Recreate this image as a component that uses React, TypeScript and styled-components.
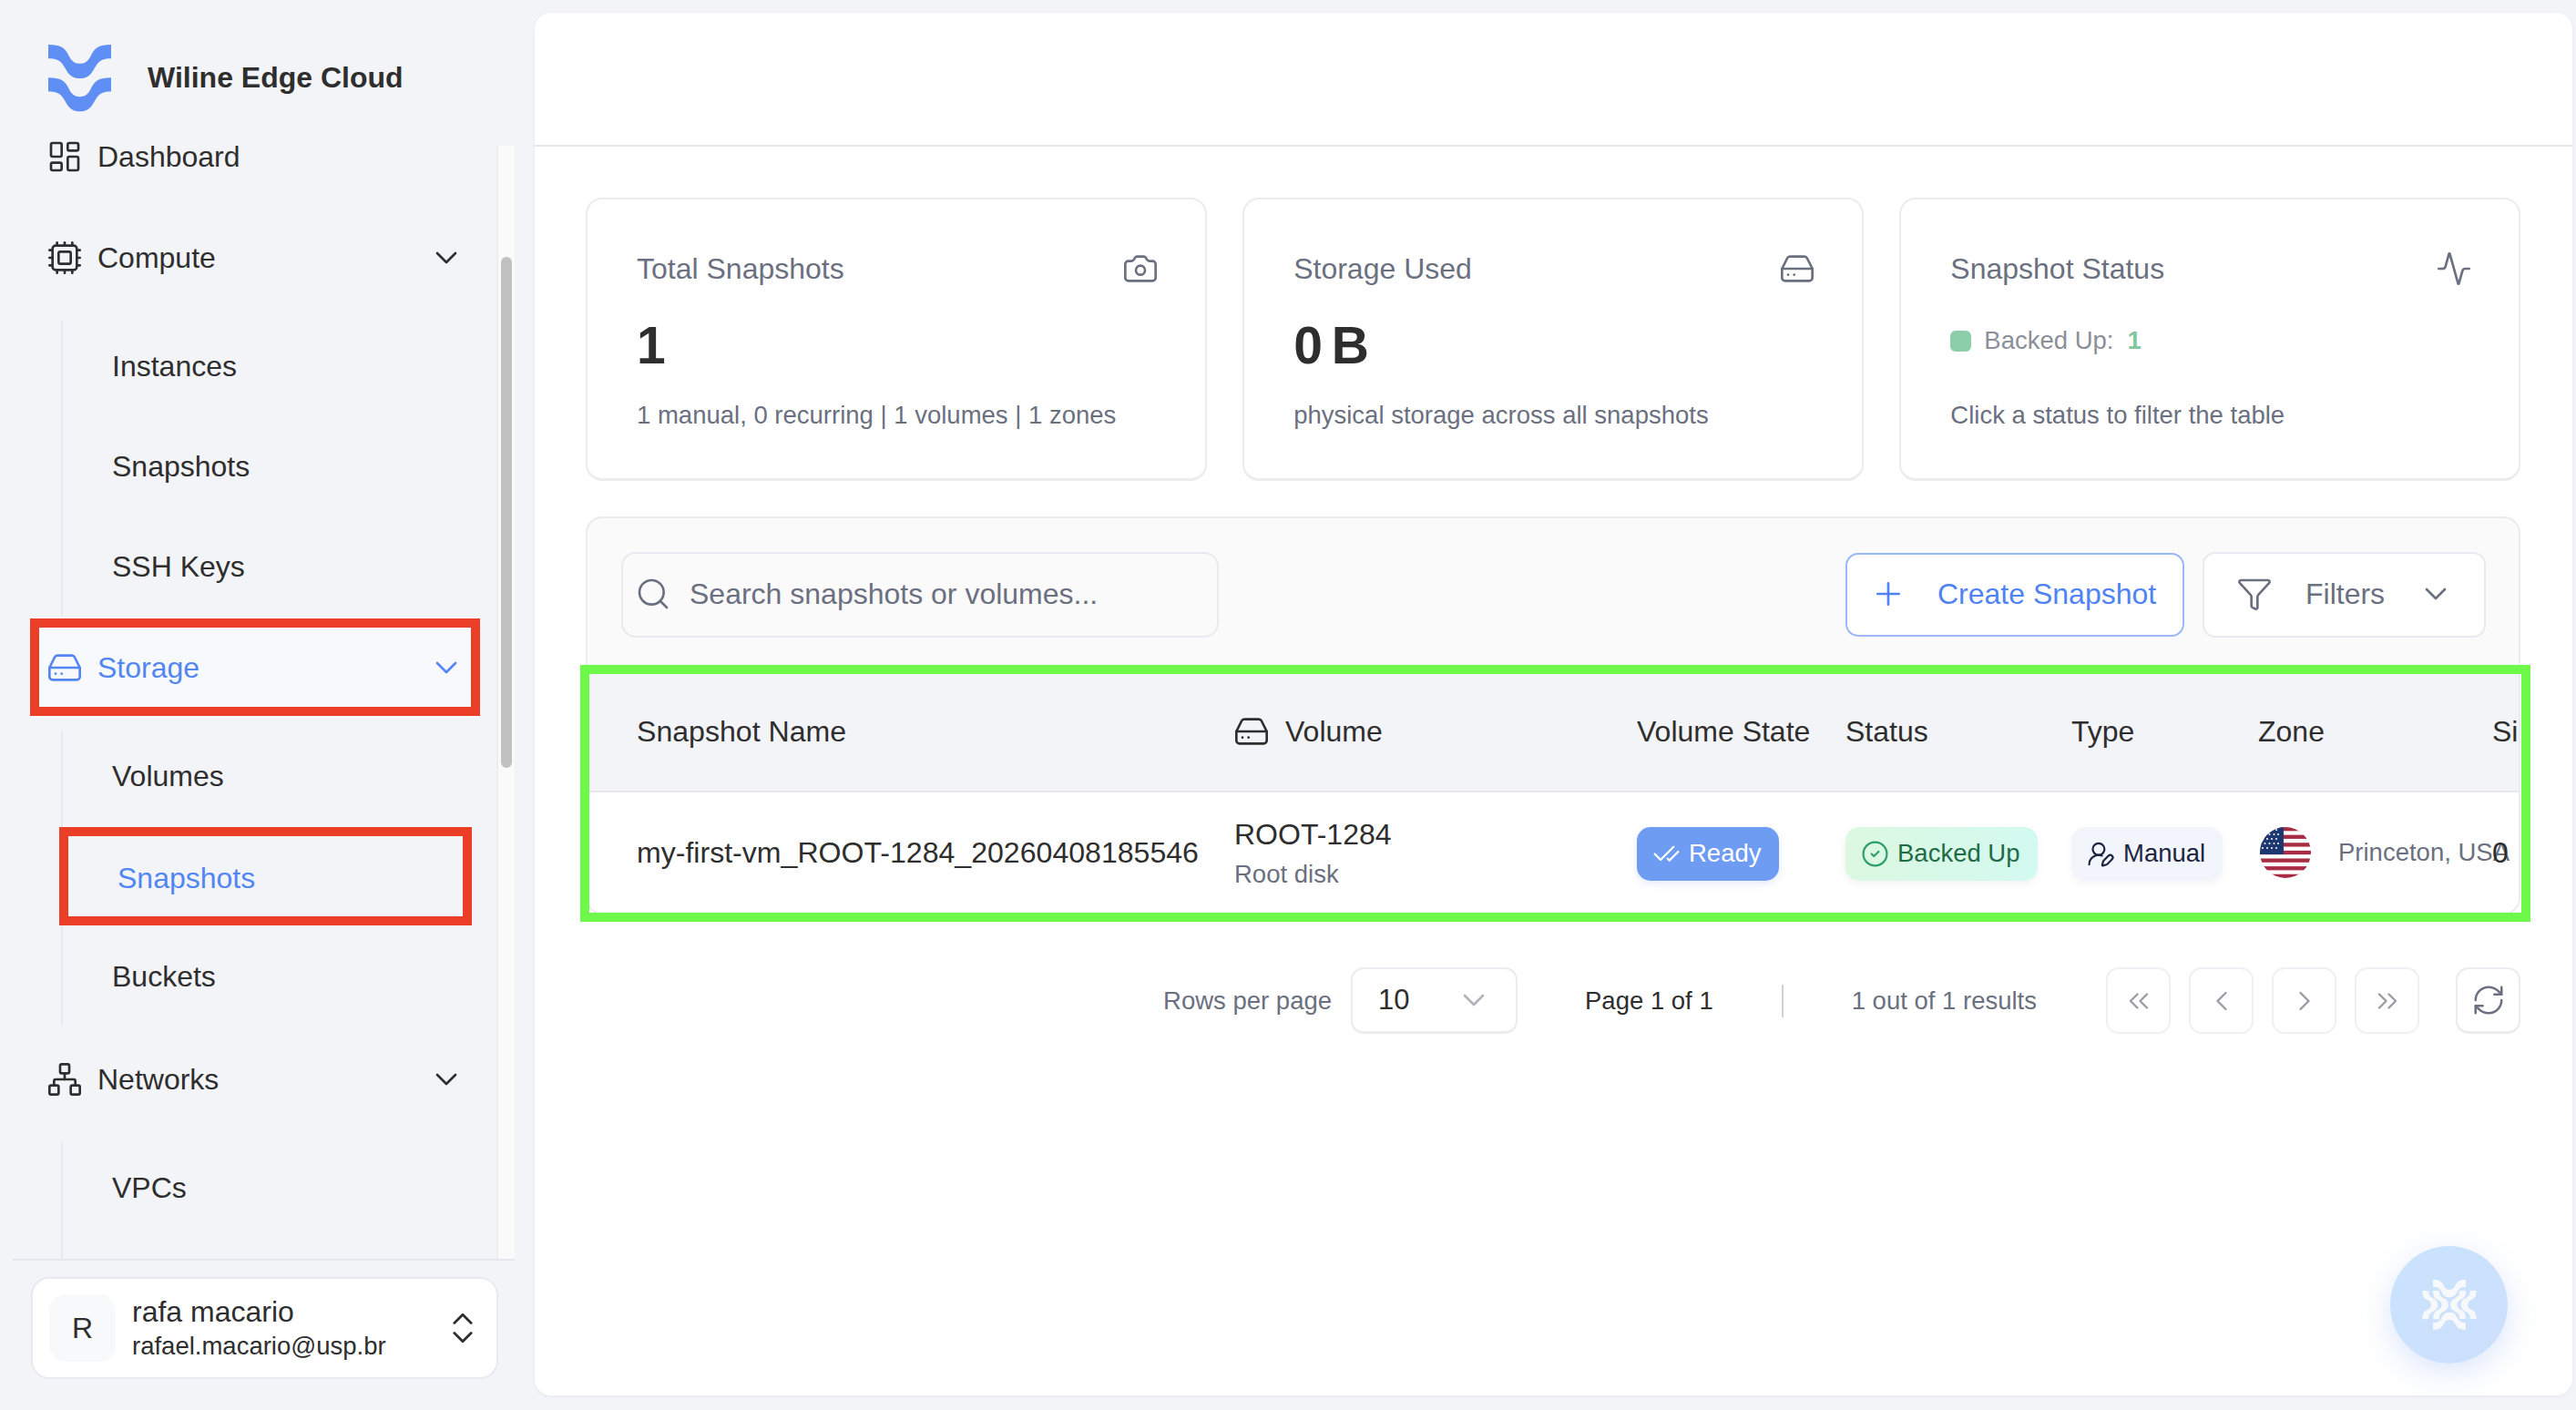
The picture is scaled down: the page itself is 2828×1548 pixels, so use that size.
import React from "react";
import styled, { createGlobalStyle } from "styled-components";
import {
  Activity,
  Camera,
  CheckCheck,
  ChevronDown,
  ChevronLeft,
  ChevronRight,
  ChevronsLeft,
  ChevronsRight,
  ChevronsUpDown,
  CircleCheck,
  Cpu,
  Funnel,
  HardDrive,
  LayoutDashboard,
  Network,
  Plus,
  RefreshCw,
  Search,
  UserRoundPen,
} from "lucide-react";

const GlobalStyle = createGlobalStyle`
  html, body {
    margin: 0;
    padding: 0;
    background: #f3f4f8;
    font-family: "Liberation Sans", Arial, sans-serif;
    color: #2e2e2e;
  }
  * { box-sizing: border-box; }
`;

const Page = styled.div`
  display: flex;
  width: 2828px;
  height: 1548px;
  overflow: hidden;
  background: #f3f4f8;
`;

/* sidebar */
const Sidebar = styled.aside`
  width: 587px;
  flex: none;
  display: flex;
  flex-direction: column;
`;

const Brand = styled.div`
  height: 150px;
  flex: none;
  display: flex;
  align-items: flex-start;
  gap: 40px;
  padding: 49px 0 0 53px;
`;

const BrandName = styled.div`
  font-size: 32px;
  font-weight: 700;
  line-height: 72px;
  color: #2e2e2e;
`;

const ScrollRow = styled.div`
  height: 1234px;
  flex: none;
  width: 551px;
  margin-left: 14px;
  display: flex;
  overflow: hidden;
  border-bottom: 2px solid #e6e7ec;
`;

const Nav = styled.nav`
  width: 494px;
  flex: none;
  margin: -33px 18px 0 19px;
`;

const NavRow = styled.div<{ $active?: boolean }>`
  position: relative;
  height: 110px;
  margin-bottom: 1px;
  display: flex;
  align-items: center;
  gap: 16px;
  padding: 0 17px 0 18px;
  font-size: 32px;
  color: ${(p) => (p.$active ? "#5286f3" : "#2e2e2e")};
  background: ${(p) => (p.$active ? "#f8f9fc" : "transparent")};

  svg { flex: none; }

  ${(p) =>
    p.$active &&
    `&::after {
      content: "";
      position: absolute;
      inset: 1px 0 2px 0;
      border: 10px solid #ea3f26;
      pointer-events: none;
    }`}
`;

const NavLabel = styled.span`
  flex: 1;
`;

const SubList = styled.div<{ $top: number; $bottom: number }>`
  display: flex;
  flex-direction: column;
  gap: 10px;
  margin: ${(p) => p.$top}px 13px ${(p) => p.$bottom}px 34px;
  padding-bottom: 4px;
  border-left: 2px solid #e6e8ee;
`;

const SubRow = styled.div<{ $active?: boolean }>`
  position: relative;
  height: 100px;
  display: flex;
  align-items: center;
  padding: ${(p) => (p.$active ? "4px 0 0 60px" : "0 0 0 54px")};
  font-size: 32px;
  color: ${(p) => (p.$active ? "#5286f3" : "#2e2e2e")};

  ${(p) =>
    p.$active &&
    `&::after {
      content: "";
      position: absolute;
      inset: -4px -4px -4px -4px;
      border: 10px solid #ea3f26;
      pointer-events: none;
    }`}
`;

const ScrollTrack = styled.div`
  width: 20px;
  flex: none;
  margin-top: 10px;
  padding: 122px 0 0 3px;
  background: #fafafa;
  border-left: 2px solid #ecedf0;
`;

const ScrollThumb = styled.div`
  width: 12px;
  height: 561px;
  border-radius: 6px;
  background: #c1c1c1;
`;

const UserCard = styled.div`
  width: 513px;
  height: 112px;
  margin: 18px 0 0 34px;
  display: flex;
  align-items: center;
  gap: 18px;
  padding: 0 15px 0 18px;
  background: #fff;
  border: 2px solid #e9eaef;
  border-radius: 20px;

  svg { flex: none; }
`;

const Avatar = styled.div`
  width: 73px;
  height: 74px;
  flex: none;
  display: flex;
  align-items: center;
  justify-content: center;
  background: #f8f9fb;
  border-radius: 18px;
  font-size: 32px;
`;

const UserInfo = styled.div`
  flex: 1;
  display: flex;
  flex-direction: column;
  gap: 4px;
`;

const UserName = styled.div`
  font-size: 32px;
  line-height: 36px;
`;

const UserEmail = styled.div`
  font-size: 27.5px;
  line-height: 32px;
`;

/* main panel */
const Main = styled.main`
  flex: 1;
  min-width: 0;
  margin: 14px 4px 16px 0;
  background: #fff;
  border-radius: 18px;
  box-shadow: 0 1px 4px rgba(30, 40, 80, 0.06);
`;

const TopBar = styled.div`
  height: 147px;
  border-bottom: 2px solid #e8e9ee;
`;

const Content = styled.div`
  padding: 56px 57px 0 56px;
`;

const Stats = styled.div`
  display: grid;
  grid-template-columns: repeat(3, 1fr);
  gap: 39.5px;
`;

const StatCard = styled.div`
  height: 311px;
  display: flex;
  flex-direction: column;
  padding: 0 54px;
  background: #fff;
  border: 2px solid #ebebf0;
  border-bottom-width: 3px;
  border-radius: 18px;
`;

const StatHead = styled.div`
  height: 40px;
  margin-top: 56px;
  display: flex;
  align-items: center;
  justify-content: space-between;
  color: #6b7080;

  svg { margin-right: -3px; }
`;

const StatTitle = styled.div`
  font-size: 32px;
`;

const StatValue = styled.div`
  margin-top: 34px;
  height: 60px;
  font-size: 57px;
  line-height: 60px;
  font-weight: 700;
  word-spacing: -6px;
  color: #2e2e2e;
`;

const StatNote = styled.div`
  margin-top: 30px;
  font-size: 27.5px;
  line-height: 34px;
  color: #6b7080;
`;

const StatusLine = styled.div`
  height: 60px;
  margin: 29px 0 5px;
  display: flex;
  align-items: center;
  font-size: 27.5px;
  color: #8b8f99;
`;

const StatusDot = styled.span`
  width: 23px;
  height: 23px;
  margin-right: 14px;
  border-radius: 6px;
  background: #8bcea8;
`;

const StatusCount = styled.span`
  margin-left: 15px;
  font-weight: 700;
  color: #7fc89d;
`;

const TableCard = styled.div`
  margin-top: 39px;
  background: #fafafa;
  border: 2px solid #ebebf0;
  border-radius: 18px;
`;

const Toolbar = styled.div`
  height: 94px;
  margin: 37px 36px 40px 37px;
  display: flex;
  align-items: center;
  gap: 20px;
`;

const SearchBox = styled.div`
  width: 656px;
  height: 94px;
  margin-right: auto;
  display: flex;
  align-items: center;
  gap: 20px;
  padding: 0 0 2px 13px;
  font-size: 32px;
  color: #6b7080;
  border: 2px solid #e9eaef;
  border-radius: 16px;
`;

const CreateButton = styled.div`
  width: 372px;
  height: 92px;
  display: flex;
  align-items: center;
  gap: 34px;
  padding: 0 0 2px 25px;
  font-size: 32px;
  color: #4f83f5;
  background: #fff;
  border: 2px solid #9ab8f8;
  border-radius: 14px;
`;

const FilterButton = styled.div`
  width: 311px;
  height: 94px;
  display: flex;
  align-items: center;
  gap: 36px;
  padding: 0 0 2px 35px;
  font-size: 32px;
  color: #6b7080;
  background: #fff;
  border: 2px solid #e9eaef;
  border-radius: 14px;
`;

const TableFrame = styled.div`
  position: relative;

  &::after {
    content: "";
    position: absolute;
    inset: -10px -13px -10px -8px;
    border: 10px solid #6ef94a;
    pointer-events: none;
  }
`;

const TableClip = styled.div`
  overflow: hidden;
  border-radius: 0 0 16px 16px;
`;

const columns = "712px 440px 229px 248px 205px 257px 100px";

const HeadRow = styled.div`
  height: 130px;
  display: grid;
  grid-template-columns: ${columns};
  align-items: center;
  padding-bottom: 2px;
  background: #f3f4f8;
  border-bottom: 2px solid #e6e7ec;
  font-size: 32px;
  color: #2e2e2e;
`;

const BodyRow = styled.div`
  height: 132px;
  display: grid;
  grid-template-columns: ${columns};
  align-items: center;
  background: #fff;
  font-size: 32px;
  color: #2e2e2e;
`;

const NameCell = styled.div`
  padding-left: 54px;
  font-size: 32.1px;
  white-space: nowrap;
`;

const VolumeHead = styled.div`
  display: flex;
  align-items: center;
  gap: 17px;
  margin-left: -3px;
`;

const VolumeCell = styled.div`
  display: flex;
  flex-direction: column;
  gap: 8px;
  margin: 4px 0 0 -2px;
`;

const VolumeName = styled.div`
  line-height: 36px;
`;

const VolumeSub = styled.div`
  font-size: 27.5px;
  line-height: 36px;
  color: #6b7080;
`;

const Badge = styled.div`
  display: inline-flex;
  align-items: center;
  gap: 9px;
  height: 59px;
  margin-top: 2px;
  padding: 0 19px 0 17px;
  font-size: 27.5px;
  border-radius: 15px;
  justify-self: start;

  svg { flex: none; }
`;

const ReadyBadge = styled(Badge)`
  color: #fff;
  background: #6f9cf3;
  box-shadow: 0 3px 8px rgba(110, 150, 240, 0.2);
`;

const BackedBadge = styled(Badge)`
  color: #1f6b45;
  background: linear-gradient(90deg, #dcf8e1, #d3faf0);
  box-shadow: 0 3px 8px rgba(60, 60, 80, 0.07);

  svg { color: #2f9e6b; }
`;

const ManualBadge = styled(Badge)`
  color: #1c2640;
  background: #f2f5fb;
  box-shadow: 0 3px 8px rgba(60, 60, 80, 0.05);
`;

const ZoneCell = styled.div`
  display: flex;
  align-items: center;
  gap: 30px;
  margin-left: 2px;
  font-size: 27.5px;
  line-height: 32px;
  color: #6b7080;
  white-space: nowrap;

  svg { flex: none; }
`;

const SizeCell = styled.div`
  margin-top: 1px;
`;

const Pagination = styled.div`
  height: 73px;
  margin-top: 58px;
  display: flex;
  align-items: center;
  justify-content: flex-end;
  font-size: 27.5px;
  color: #6b7080;
`;

const PageSelect = styled.div`
  width: 183px;
  height: 73px;
  margin: 0 74px 0 21px;
  display: flex;
  align-items: center;
  justify-content: space-between;
  padding: 0 26px 0 28px;
  font-size: 31px;
  color: #2e2e2e;
  background: #fff;
  border: 2px solid #ebebf0;
  border-bottom-width: 3px;
  border-radius: 14px;

  svg { color: #b0b3ba; }
`;

const PageLabel = styled.div`
  color: #2e2e2e;
`;

const Divider = styled.div`
  width: 2px;
  height: 36px;
  margin: 0 75px;
  background: #cfd1d6;
`;

const PageButton = styled.div<{ $first?: boolean }>`
  width: 71px;
  height: 73px;
  margin-left: ${(p) => (p.$first ? "76px" : "20px")};
  display: flex;
  align-items: center;
  justify-content: center;
  color: #9a9da5;
  background: #fff;
  border: 2px solid #f0f0f4;
  border-radius: 14px;
`;

const RefreshButton = styled(PageButton)`
  margin-left: 40px;
  color: #6b7080;
  border-color: #ebebf0;
  border-bottom-width: 3px;
`;

const Fab = styled.div`
  position: fixed;
  right: 75px;
  bottom: 51px;
  width: 129px;
  height: 129px;
  display: flex;
  align-items: center;
  justify-content: center;
  border-radius: 50%;
  background: linear-gradient(135deg, #c9e3fd, #cddffc);
  box-shadow: 0 10px 34px rgba(90, 140, 230, 0.22);
`;

const wavePath =
  "M40 40C80 40 95 50 108 78C118 97 128 102 143 102C158 102 168 97 178 78C191 50 206 40 245 40V85C215 85 205 92 192 115C178 142 165 150 143 150C121 150 108 142 94 115C81 92 71 85 40 85Z";

const Logo = () => (
  <svg width="69" height="74" viewBox="40 40 205 220" fill="#5f8ff4">
    <path d={wavePath} />
    <path d={wavePath} transform="translate(0 108)" />
  </svg>
);

const FabLogo = () => (
  <svg width="60" height="55" viewBox="145 165 178 165" fill="#f7f8fa">
    <path d={wavePath} transform="translate(180 165) scale(.527) translate(-40 -40)" />
    <path d={wavePath} transform="translate(180 330) scale(.527 -.527) translate(-40 -40)" />
    <path d={wavePath} transform="translate(145 295) rotate(-90) scale(.46) translate(-40 -40)" />
    <path d={wavePath} transform="translate(180 295) rotate(-90) scale(.46) translate(-40 -40)" />
    <path d={wavePath} transform="translate(323 200) rotate(90) scale(.46) translate(-40 -40)" />
    <path d={wavePath} transform="translate(288 200) rotate(90) scale(.46) translate(-40 -40)" />
  </svg>
);

const stripes = [0, 2, 4, 6, 8, 10, 12];
const stars = [
  [3, 3], [8, 3], [13, 3], [18, 3],
  [5.5, 8], [10.5, 8], [15.5, 8], [20, 8],
  [3, 13], [8, 13], [13, 13], [18, 13],
  [5.5, 18], [10.5, 18], [15.5, 18], [20, 18],
  [3, 23], [8, 23], [13, 23], [18, 23],
];

const UsFlag = () => (
  <svg width="56" height="56" viewBox="0 0 56 56">
    <defs>
      <clipPath id="flag-circle">
        <circle cx="28" cy="28" r="28" />
      </clipPath>
    </defs>
    <g clipPath="url(#flag-circle)">
      <rect width="56" height="56" fill="#fff" />
      {stripes.map((i) => (
        <rect key={i} y={i * 4.31} width="56" height="4.31" fill="#a92c45" />
      ))}
      <rect width="26" height="30" fill="#1d3770" />
      {stars.map(([x, y]) => (
        <circle key={`${x}-${y}`} cx={x} cy={y} r="1" fill="#fff" />
      ))}
    </g>
  </svg>
);

const icon = { size: 40, strokeWidth: 1.6 };
const small = { size: 31, strokeWidth: 1.7 };

export default function App() {
  return (
    <Page>
      <GlobalStyle />
      <Sidebar>
        <Brand>
          <Logo />
          <BrandName>Wiline Edge Cloud</BrandName>
        </Brand>
        <ScrollRow>
          <Nav>
            <NavRow>
              <LayoutDashboard {...icon} />
              <NavLabel>Dashboard</NavLabel>
            </NavRow>
            <NavRow>
              <Cpu {...icon} />
              <NavLabel>Compute</NavLabel>
              <ChevronDown {...icon} />
            </NavRow>
            <SubList $top={14} $bottom={2}>
              <SubRow>Instances</SubRow>
              <SubRow>Snapshots</SubRow>
              <SubRow>SSH Keys</SubRow>
            </SubList>
            <NavRow $active>
              <HardDrive {...icon} />
              <NavLabel>Storage</NavLabel>
              <ChevronDown {...icon} />
            </NavRow>
            <SubList $top={14} $bottom={4}>
              <SubRow>Volumes</SubRow>
              <SubRow $active>Snapshots</SubRow>
              <SubRow>Buckets</SubRow>
            </SubList>
            <NavRow>
              <Network {...icon} />
              <NavLabel>Networks</NavLabel>
              <ChevronDown {...icon} />
            </NavRow>
            <SubList $top={14} $bottom={0}>
              <SubRow>VPCs</SubRow>
              <SubRow />
            </SubList>
          </Nav>
          <ScrollTrack>
            <ScrollThumb />
          </ScrollTrack>
        </ScrollRow>
        <UserCard>
          <Avatar>R</Avatar>
          <UserInfo>
            <UserName>rafa macario</UserName>
            <UserEmail>rafael.macario@usp.br</UserEmail>
          </UserInfo>
          <ChevronsUpDown size={44} strokeWidth={1.5} />
        </UserCard>
      </Sidebar>

      <Main>
        <TopBar />
        <Content>
          <Stats>
            <StatCard>
              <StatHead>
                <StatTitle>Total Snapshots</StatTitle>
                <Camera {...icon} />
              </StatHead>
              <StatValue>1</StatValue>
              <StatNote>1 manual, 0 recurring | 1 volumes | 1 zones</StatNote>
            </StatCard>
            <StatCard>
              <StatHead>
                <StatTitle>Storage Used</StatTitle>
                <HardDrive {...icon} />
              </StatHead>
              <StatValue>0 B</StatValue>
              <StatNote>physical storage across all snapshots</StatNote>
            </StatCard>
            <StatCard>
              <StatHead>
                <StatTitle>Snapshot Status</StatTitle>
                <Activity {...icon} />
              </StatHead>
              <StatusLine>
                <StatusDot />
                Backed Up:
                <StatusCount>1</StatusCount>
              </StatusLine>
              <StatNote>Click a status to filter the table</StatNote>
            </StatCard>
          </Stats>

          <TableCard>
            <Toolbar>
              <SearchBox>
                <Search {...icon} />
                Search snapshots or volumes...
              </SearchBox>
              <CreateButton>
                <Plus {...icon} />
                Create Snapshot
              </CreateButton>
              <FilterButton>
                <Funnel {...icon} />
                Filters
                <ChevronDown {...icon} />
              </FilterButton>
            </Toolbar>
            <TableFrame>
              <TableClip>
                <HeadRow>
                  <NameCell>Snapshot Name</NameCell>
                  <VolumeHead>
                    <HardDrive {...icon} />
                    Volume
                  </VolumeHead>
                  <div>Volume State</div>
                  <div>Status</div>
                  <div>Type</div>
                  <div>Zone</div>
                  <div>Size</div>
                </HeadRow>
                <BodyRow>
                  <NameCell>my-first-vm_ROOT-1284_20260408185546</NameCell>
                  <VolumeCell>
                    <VolumeName>ROOT-1284</VolumeName>
                    <VolumeSub>Root disk</VolumeSub>
                  </VolumeCell>
                  <ReadyBadge>
                    <CheckCheck {...small} />
                    Ready
                  </ReadyBadge>
                  <BackedBadge>
                    <CircleCheck {...small} />
                    Backed Up
                  </BackedBadge>
                  <ManualBadge>
                    <UserRoundPen {...small} />
                    Manual
                  </ManualBadge>
                  <ZoneCell>
                    <UsFlag />
                    Princeton, USA
                  </ZoneCell>
                  <SizeCell>0</SizeCell>
                </BodyRow>
              </TableClip>
            </TableFrame>
          </TableCard>

          <Pagination>
            <div>Rows per page</div>
            <PageSelect>
              10
              <ChevronDown {...icon} />
            </PageSelect>
            <PageLabel>Page 1 of 1</PageLabel>
            <Divider />
            <div>1 out of 1 results</div>
            <PageButton $first>
              <ChevronsLeft size={36} strokeWidth={1.6} />
            </PageButton>
            <PageButton>
              <ChevronLeft size={36} strokeWidth={1.6} />
            </PageButton>
            <PageButton>
              <ChevronRight size={36} strokeWidth={1.6} />
            </PageButton>
            <PageButton>
              <ChevronsRight size={36} strokeWidth={1.6} />
            </PageButton>
            <RefreshButton>
              <RefreshCw size={38} strokeWidth={1.6} />
            </RefreshButton>
          </Pagination>
        </Content>
      </Main>
      <Fab>
        <FabLogo />
      </Fab>
    </Page>
  );
}
